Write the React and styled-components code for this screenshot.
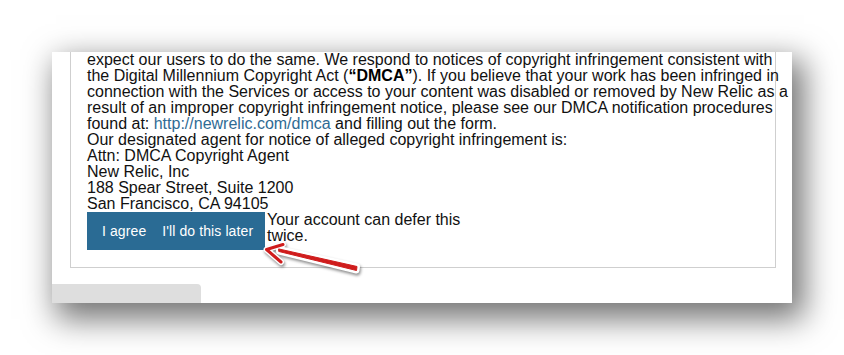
import React from "react";
import styled, { createGlobalStyle } from "styled-components";

const Global = createGlobalStyle`
  html, body { margin: 0; padding: 0; background: #ffffff; }
  body { font-family: "Liberation Sans", Arial, sans-serif; }
`;

const Page = styled.div`
  width: 844px;
  height: 355px;
  padding: 52px 0 0 52px;
  box-sizing: border-box;
  overflow: hidden;
`;

const Card = styled.div`
  width: 740px;
  height: 251px;
  background: #ffffff;
  box-shadow: 8px 12px 30px 4px rgba(0, 0, 0, 0.55);
  display: flex;
  flex-direction: column;
  gap: 16px;
`;

const Terms = styled.div`
  margin: 0 16px 0 18px;
  height: 216px;
  box-sizing: border-box;
  border: 1px solid #cfcfcf;
  border-top: none;
  padding: 0 16px 17px 16px;
  display: flex;
  flex-direction: column;
`;

const Paragraph = styled.p`
  margin: 0;
  font-size: 16px;
  line-height: 16px;
  color: #111111;
  white-space: nowrap;
`;

const Strong = styled.strong`
  font-weight: bold;
  color: #000;
`;

const Link = styled.a`
  color: #2f6b94;
  text-decoration: none;
`;

const ActionRow = styled.div`
  position: relative;
  display: flex;
  align-items: flex-start;
  height: 38px;
`;

const ButtonGroup = styled.div`
  display: flex;
  align-items: center;
  height: 38px;
  width: 178px;
  background: #2a6b94;
  padding: 0 0 0 7px;
  box-sizing: border-box;
`;

const ActionButton = styled.button`
  border: none;
  background: transparent;
  color: #ffffff;
  font-family: "Liberation Sans", Arial, sans-serif;
  font-size: 14px;
  letter-spacing: 0.1px;
  padding: 0 8px;
  height: 38px;
  cursor: pointer;
  white-space: nowrap;
`;

const DeferNote = styled.div`
  width: 200px;
  margin-left: 2px;
  font-size: 16px;
  line-height: 16px;
  color: #111111;
`;

const ArrowMark = styled.svg`
  position: absolute;
  left: 171px;
  top: 24px;
  overflow: visible;
  filter: drop-shadow(1px 2px 1.5px rgba(0, 0, 0, 0.45));
`;

const Tab = styled.div`
  width: 149px;
  height: 19px;
  background: #dedede;
  border-top-right-radius: 4px;
`;

const Arrow = () => (
  <ArrowMark width="106" height="40" viewBox="0 0 106 40">
    <g stroke="#ffffff" strokeWidth="6" strokeLinecap="round" strokeLinejoin="round" fill="#ffffff">
      <polygon points="21,13 99,30.5 98.5,34.5 21,15.5" />
      <path d="M25,8.5 L8.5,13.5 L23,26" fill="none" />
    </g>
    <g stroke="#cf1c1c" strokeLinecap="round" strokeLinejoin="round" fill="#cf1c1c">
      <polygon points="21,13 99,30.5 98.5,34.5 21,15.5" strokeWidth="1" />
      <path d="M25,8.5 L8.5,13.5 L23,26" fill="none" strokeWidth="3" />
    </g>
  </ArrowMark>
);

export default function App() {
  return (
    <>
      <Global />
      <Page>
        <Card>
          <Terms>
            <Paragraph>
              expect our users to do the same. We respond to notices of copyright infringement consistent with
              <br />
              the Digital Millennium Copyright Act (<Strong>“DMCA”</Strong>). If you believe that your work has been infringed in
              <br />
              connection with the Services or access to your content was disabled or removed by New Relic as a
              <br />
              result of an improper copyright infringement notice, please see our DMCA notification procedures
              <br />
              found at: <Link href="#">http://newrelic.com/dmca</Link> and filling out the form.
              <br />
              Our designated agent for notice of alleged copyright infringement is:
              <br />
              Attn: DMCA Copyright Agent
              <br />
              New Relic, Inc
              <br />
              188 Spear Street, Suite 1200
              <br />
              San Francisco, CA 94105
            </Paragraph>
            <ActionRow>
              <ButtonGroup>
                <ActionButton>I agree</ActionButton>
                <ActionButton>I'll do this later</ActionButton>
              </ButtonGroup>
              <DeferNote>Your account can defer this twice.</DeferNote>
              <Arrow />
            </ActionRow>
          </Terms>
          <Tab />
        </Card>
      </Page>
    </>
  );
}
